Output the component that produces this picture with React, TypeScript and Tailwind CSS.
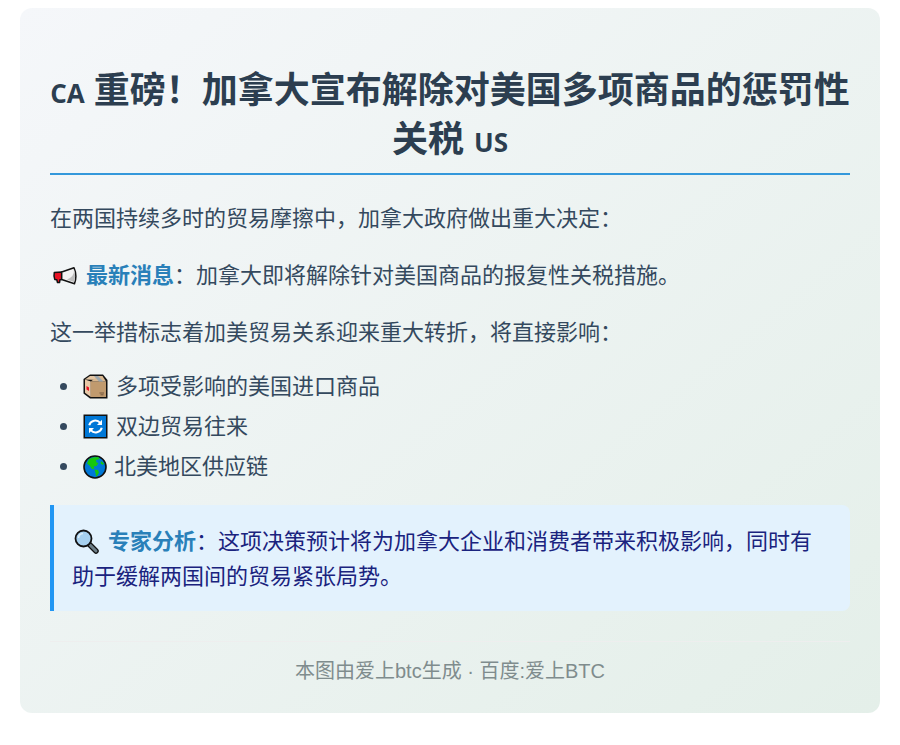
const Megaphone = () => (
  <svg viewBox="0 0 26 20" className="ml-[2px] inline-block w-[26px] h-[20px] mr-[8px] align-[-3px]">
    <path d="M2.3 6.5 L9.7 6 L9.7 13.5 L8 13.7 L7.5 16.5 L5.5 16.5 L4.8 13.7 L2.8 13.5 Q1.5 10 2.3 6.5Z" fill="#e81224" stroke="#111" strokeWidth="1.5" strokeLinejoin="round" />
    <path d="M9.7 6 L22 1.8 Q25.5 9.5 22.5 17.7 L9.7 13.5Z" fill="#f2f2f2" stroke="#111" strokeWidth="1.5" strokeLinejoin="round" />
    <path d="M15 13.5 L22 16 Q24 9.5 22 3.5 Q22.5 10.5 15 13.5Z" fill="#bdbdbd" />
  </svg>
)

const PackageBox = () => (
  <svg viewBox="0 0 25 25" className="inline-block w-[25px] h-[25px] mr-[8px] align-[-5px]">
    <path d="M0.5 5 L7 0.5 L20 0.5 L24.5 6 L24.5 24.5 L7 24.5 L0.5 19.5Z" fill="#111" />
    <path d="M2 5.6 L7 2 L19.5 2 L15 6Z" fill="#e3c6a4" />
    <path d="M2 5.6 L7.8 7.5 L7.8 23 L2 18.8Z" fill="#e8c9a8" />
    <path d="M7.8 7.5 L23 7.5 L23 23 L7.8 23Z" fill="#c09a6e" />
    <path d="M19.5 2 L23 7.5 L7.8 7.5 L15 2Z" fill="#d9b890" />
    <path d="M11 2 L15 2 L20.5 7.5 L16 7.5Z" fill="#9ba6ad" />
    <path d="M3.5 12 L6 13.5 L6 17 L3.5 15.5Z" fill="#e81224" />
    <path d="M16.5 19 L21 19 M17.5 20.8 L20.5 20.8" stroke="#6e5138" strokeWidth="0.9" />
  </svg>
)

const RefreshSquare = () => (
  <svg viewBox="0 0 25 25" className="inline-block w-[25px] h-[25px] mr-[8px] align-[-5px]">
    <rect x="0.5" y="0.5" width="24" height="24" fill="#111" />
    <rect x="2" y="2" width="21" height="21" fill="#0078d7" />
    <path d="M6.2 11.2 A6.4 6.4 0 0 1 17.2 8.8" fill="none" stroke="#fff" strokeWidth="2" />
    <path d="M19 5.8 L19 11 L14 11Z" fill="#fff" />
    <path d="M18.8 13.8 A6.4 6.4 0 0 1 7.8 16.2" fill="none" stroke="#fff" strokeWidth="2" />
    <path d="M6 19.2 L6 14 L11 14Z" fill="#fff" />
  </svg>
)

const Globe = () => (
  <svg viewBox="0 0 24 24" className="inline-block w-[24px] h-[24px] mr-[7px] align-[-5px]">
    <circle cx="12" cy="12" r="11" fill="#0078d7" stroke="#111" strokeWidth="1.6" />
    <path d="M6 4 Q10 1.8 15 2 L17 4 L13 5 L13.5 7.5 L15.5 8 L13.5 11 L10.5 11.5 L11.5 14 L9 14 L6.5 10.5 L4 8.5Z" fill="#16c60c" />
    <path d="M11.5 14.5 L15 15 L16 17.5 L14 21 L13 21.5 L12.5 18Z" fill="#16c60c" />
    <path d="M18 6 L21 8.5 L20 10 L17.5 8.5Z" fill="#16c60c" />
  </svg>
)

const Magnifier = () => (
  <svg viewBox="0 0 25 25" className="ml-[2px] inline-block w-[25px] h-[25px] mr-[9px] align-[-5px]">
    <path d="M15.5 15.5 L22 22" stroke="#111" strokeWidth="5.5" strokeLinecap="round" />
    <path d="M16 16 L22 22" stroke="#6e7f88" strokeWidth="3" strokeLinecap="round" />
    <circle cx="9.5" cy="9.5" r="8" fill="#a6d0ef" stroke="#111" strokeWidth="1.8" />
    <path d="M4.5 9 A5 5 0 0 1 9 4.5" fill="none" stroke="#dceefa" strokeWidth="1.6" />
  </svg>
)

const bullet = "relative before:absolute before:left-[-23px] before:top-[14px] before:size-[7px] before:rounded-full before:bg-[#34495e]"

export default function App() {
  return (
    <div className="mx-5 my-2 rounded-xl bg-gradient-to-br from-[#f5f7fa] to-[#e4efe9] px-[30px] pt-[59px] pb-[26px] text-[22px] leading-[35.2px] text-[#34495e] font-['Liberation_Sans','Noto_Sans_CJK_SC',sans-serif]">
      <h1 className="border-b-2 border-[#3498db] pb-[8px] text-center text-[36px] font-bold leading-[46px] text-[#2c3e50] font-['Open_Sans','Noto_Sans_CJK_SC',sans-serif] whitespace-nowrap">
        <span className="mr-[9px] text-[26px]">CA</span>重磅！加拿大宣布解除对美国多项商品的惩罚性
        <br />
        关税<span className="ml-[10px] text-[26px]">US</span>
      </h1>

      <p className="mt-[26px]">在两国持续多时的贸易摩擦中，加拿大政府做出重大决定：</p>
      <p className="mt-[22px]">
        <Megaphone />
        <strong className="font-bold text-[#2980b9]">最新消息</strong>：加拿大即将解除针对美国商品的报复性关税措施。
      </p>
      <p className="mt-[22px]">这一举措标志着加美贸易关系迎来重大转折，将直接影响：</p>

      <ul className="mt-[18px] list-none pl-[33px]">
        <li className={`mb-[5px] ${bullet}`}><PackageBox />多项受影响的美国进口商品</li>
        <li className={`mb-[5px] ${bullet}`}><RefreshSquare />双边贸易往来</li>
        <li className={bullet}><Globe />北美地区供应链</li>
      </ul>

      <div className="mt-[21px] rounded-r-lg border-l-4 border-[#2196f3] bg-[#e3f2fd] pt-[19px] pb-[16px] pl-[18px] pr-[20px] text-[#1a237e]">
        <Magnifier />
        <strong className="font-bold text-[#2980b9]">专家分析</strong>：这项决策预计将为加拿大企业和消费者带来积极影响，同时有助于缓解两国间的贸易紧张局势。
      </div>

      <div className="mt-[30px] border-t border-[#eeeeee] pt-[13px] text-center text-[20px] leading-[32px] text-[#7f8c8d]">
        本图由爱上btc生成 · 百度:爱上BTC
      </div>
    </div>
  )
}
